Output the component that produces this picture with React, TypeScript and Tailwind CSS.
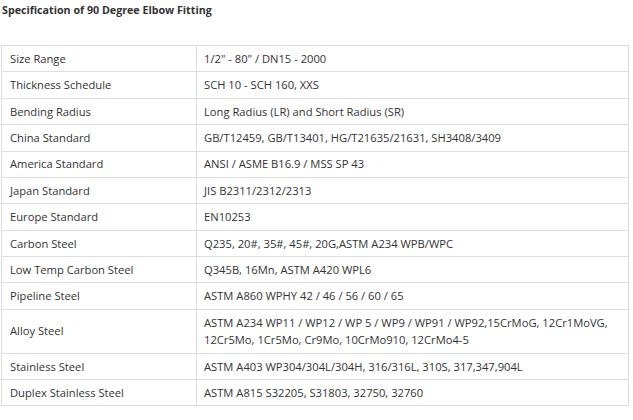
import React from "react";

const rows: [string, string][] = [
  ["Size Range", "1/2\" - 80\" / DN15 - 2000"],
  ["Thickness Schedule", "SCH 10 - SCH 160, XXS"],
  ["Bending Radius", "Long Radius (LR) and Short Radius (SR)"],
  ["China Standard", "GB/T12459, GB/T13401, HG/T21635/21631, SH3408/3409"],
  ["America Standard", "ANSI / ASME B16.9 / MSS SP 43"],
  ["Japan Standard", "JIS B2311/2312/2313"],
  ["Europe Standard", "EN10253"],
  ["Carbon Steel", "Q235, 20#, 35#, 45#, 20G,ASTM A234 WPB/WPC"],
  ["Low Temp Carbon Steel", "Q345B, 16Mn, ASTM A420 WPL6"],
  ["Pipeline Steel", "ASTM A860 WPHY 42 / 46 / 56 / 60 / 65"],
  [
    "Alloy Steel",
    "ASTM A234 WP11 / WP12 / WP 5 / WP9 / WP91 / WP92,15CrMoG, 12Cr1MoVG, 12Cr5Mo, 1Cr5Mo, Cr9Mo, 10CrMo910, 12CrMo4-5",
  ],
  ["Stainless Steel", "ASTM A403 WP304/304L/304H, 316/316L, 310S, 317,347,904L"],
  ["Duplex Stainless Steel", "ASTM A815 S32205, S31803, 32750, 32760"],
];

export default function App() {
  return (
    <div className="w-[633px] h-[420px] bg-white text-[#333] overflow-hidden font-['Open_Sans','Noto_Sans',sans-serif]">
      <div className="pl-[2px] pt-[2px] text-[10.7px] leading-[17px] font-bold text-[#333]">
        Specification of 90 Degree Elbow Fitting
      </div>
      <table className="mt-[26px] ml-[1px] w-[628px] border-collapse text-[11.2px] leading-[17.6px]">
        <tbody>
          {rows.map(([k, v]) => (
            <tr key={k}>
              <td className="w-[195px] border border-[#ddd] px-[8px] py-[3.9px] align-middle">{k}</td>
              <td className="border border-[#ddd] px-[7px] py-[3.9px] align-middle">{v}</td>
            </tr>
          ))}
        </tbody>
      </table>
    </div>
  );
}
